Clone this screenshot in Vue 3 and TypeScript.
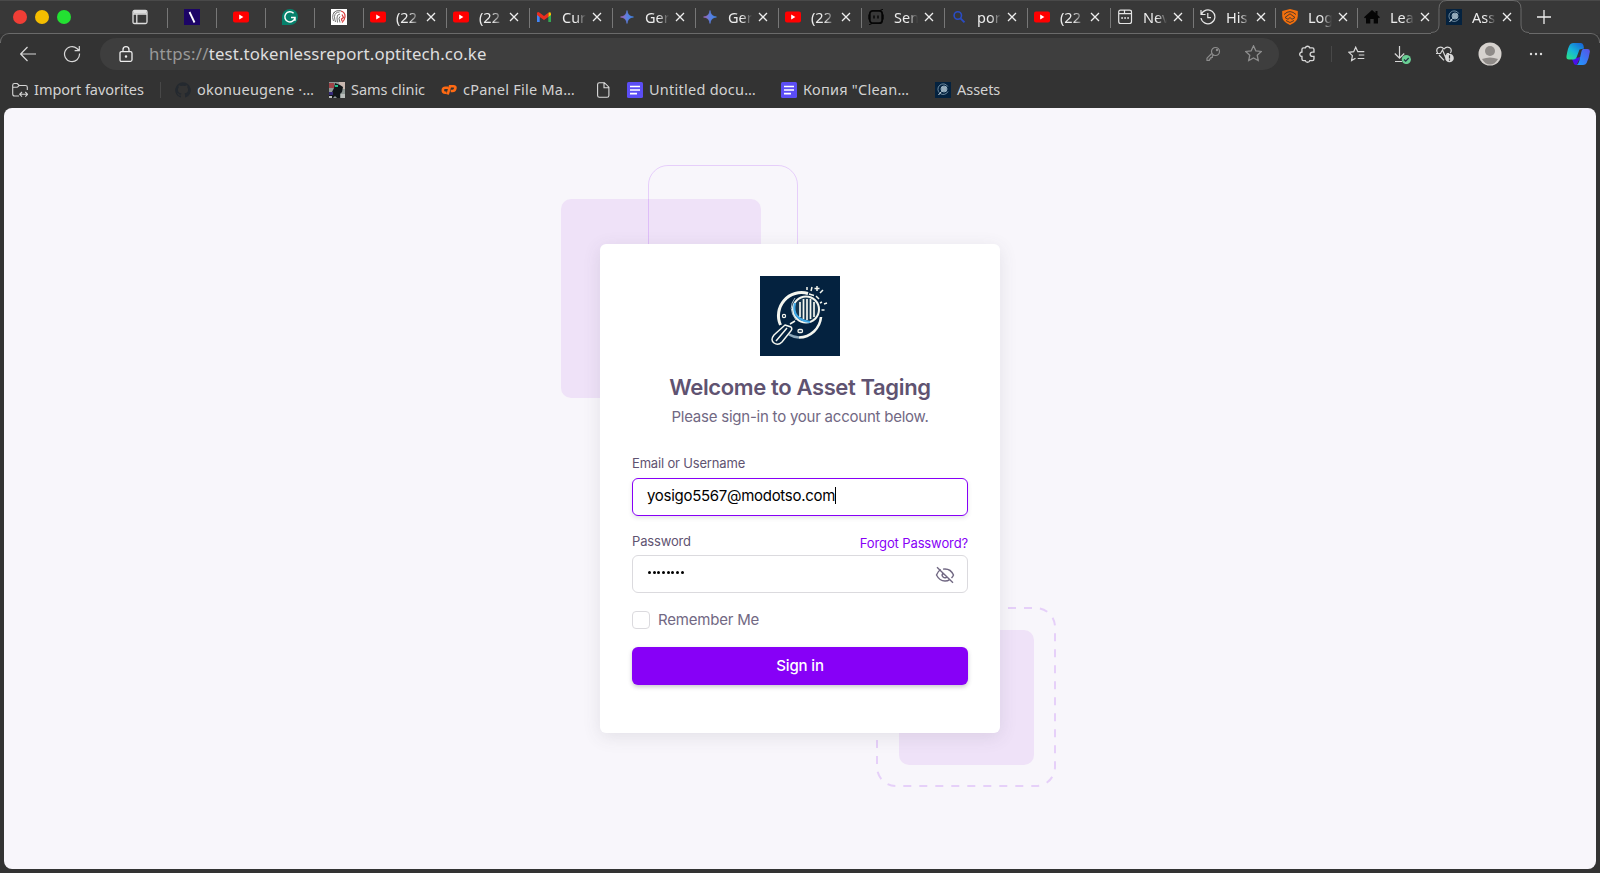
<script setup lang="ts">
interface Tab { icon: string; label: string; active?: boolean; narrow?: boolean }
interface Bookmark { icon: string; label: string; w: number }

const yt = '<rect y="2.6" width="16" height="11" rx="2" fill="#f00"/><path d="M6.2 5.6v5L10.4 8.100z" fill="#fff"/>'
const assets = '<path d="M0 0h16v16H0z" fill="#04223f"/><circle cx="9" cy="7" r="3" fill="#54758d" stroke="#a3bac8" stroke-width=".9"/><path d="M12.8 4.500A5.300 5.300 0 1 0 13 9.500" fill="none" stroke="#7894a8" stroke-width=".9"/><path d="M6.500 9.500L3.500 13M8 5v4M10 5v4" stroke="#d7e2e8" fill="none"/>'
const docs = '<rect width="16" height="16" rx="1.500" fill="#5b4df5"/><path d="M3 4.500h10M3 8h10M3 11.600h7" stroke="#fff" stroke-width="1.700"/>'
const gem = '<defs><linearGradient id="gm"><stop offset=".1" stop-color="#9a68c0"/><stop offset=".5" stop-color="#5a7fe0"/><stop offset="1" stop-color="#3f87ea"/></linearGradient></defs><path d="M8 1.500Q8.600 7.300 14.500 8Q8.600 8.700 8 14.500Q7.400 8.700 1.500 8Q7.400 7.300 8 1.500z" fill="url(#gm)" stroke="url(#gm)" stroke-width=".6"/>'

const glyphs: Record<string, string> = {
  yt, assets, docs, gem,
  slash: '<path d="M0 0h16v16H0z" fill="#1c0466"/><path d="M5.500 3l5 10.500" stroke="#fff" stroke-width="1.800"/>',
  grammar: '<path d="M8 0a8 8 0 1 1 0 16H0V8a8 8 0 0 1 8-8z" fill="#06806b"/><path d="M11.600 4.300A5.100 5.100 0 1 0 13 8.500H9M13 8.500v3.300" fill="none" stroke="#fff" stroke-width="1.500"/>',
  lion: '<path d="M0 0h16v16H0z" fill="#fff"/><g fill="none"><path d="M10 1.800Q4 .5 2 5.500q-1 3 .5 6.500M8.500 3Q4 3 3.500 7.500q0 2.500 1 5.500M9 5Q5.500 5.500 6 9l.5 4.500M9 7.500l-1 2 1 4M2 4.500l2-1.500" stroke="#666" stroke-width=".9"/><path d="M10 2q4.500 1.500 4 6-.5 3.500-3 5.500M11 5.500l1.500 3-2 1.500.5 2" stroke="#d93b3b" stroke-width="1.200"/></g>',
  gmail: '<path d="M1 4.500V13h2.700V7.500z" fill="#4285f4"/><path d="M12.300 7.500V13H15V4.500z" fill="#34a853"/><path d="M12.300 3.800V8L15 6V4.500Q14.500 2.300 12.300 3.800z" fill="#fbbc04"/><path d="M1 6V4.300Q1.500 2.300 3.700 3.700L8 7l4.300-3.300V8L8 11 3.700 8z" fill="#ea2d1f"/>',
  bot: '<rect x="1.800" y="1.800" width="12.400" height="12.400" rx="3" fill="none" stroke="#050505" stroke-width="1.800"/><path d="M6 6.500v3M10 6.500v3M1 5.500v5M15 5.500v5" stroke="#050505" stroke-width="1.400"/><path d="M12 1.500l3-1.300M4 14.500l-3 1.300" stroke="#050505" stroke-width="1"/>',
  search: '<circle cx="6.800" cy="6.500" r="3.700" fill="none" stroke="#2a4cc4" stroke-width="1.600"/><path d="M9.500 9.300l4 4" stroke="#2a4cc4" stroke-width="1.900"/>',
  news: '<path d="M1.700 4V3Q1.700 1.200 3.500 1.200h9Q14.500 1.200 14.500 3v9.500q0 2-2 2h-9q-1.800 0-1.800-2zM2 4.700h5.500V1.500M8 4.700h6" fill="none" stroke="#e4e4e4" stroke-width="1.200"/><path d="M4.200 9h1.800M7.200 9H9M10.200 9H12" stroke="#e4e4e4" stroke-width="1.600"/>',
  history: '<path d="M1 1v4.500h4.500M1.300 5.500A7 7 0 1 1 1 9M7.800 4v4.700h3.200" fill="none" stroke="#e8e8e8" stroke-width="1.200"/>',
  shield: '<path d="M8 0l7.800 2v5q0 6-7.800 9Q.2 13 .2 7V2z" fill="#f3700d"/><path d="M2 5.500Q5 2.500 8 2.600T14 5.500M3 8.500L8 4.800l5 3.700-3 1.800-2-1.800-2 1.800zM4 11.500l4 2 4-2" fill="none" stroke="#42312a" stroke-width=".9"/>',
  house: '<path d="M0 8.300L8 1l3.500 3V2h2v4L16 8.300l-1.200 1L14 8.600V14.500H9.700V10H6.300v4.500H2V8.600l-.9.800z" fill="#050505"/>',
  folder: '<path d="M7 14H2.700Q.7 14 .7 12V3.300Q.7 1.500 2.500 1.500h2.700l2 2h6.300q1.800 0 1.800 1.800V8M.7 5.300h4.500l2-1.800M10 10l-2.300 2.300L10 14.600M13.300 10l2.300 2.300-2.300 2.300M7.800 12.300h7.600" fill="none" stroke="#d5d5d5" stroke-width="1.100"/>',
  github: '<path d="M8 .3a7.800 7.800 0 0 0-2.500 15.200c.4.100.5-.2.500-.4v-1.500c-2.200.5-2.700-.9-2.700-.9-.4-.9-.9-1.200-.9-1.200-.7-.5.100-.5.100-.5.800.100 1.200.8 1.200.8.700 1.200 1.900.9 2.300.7.100-.5.300-.9.500-1.100-1.700-.2-3.600-.9-3.600-3.900 0-.9.300-1.600.8-2.100-.100-.2-.4-1 .100-2.100 0 0 .7-.2 2.200.8a7.600 7.600 0 0 1 4 0c1.500-1 2.200-.8 2.200-.8.4 1.100.200 1.900.100 2.100.5.600.8 1.300.8 2.100 0 3-1.900 3.700-3.600 3.900.3.300.5.700.5 1.500v2.200c0 .2.100.500.5.4A7.800 7.800 0 0 0 8 .3z" fill="#24292f"/>',
  sams: '<path d="M0 0h16v16H0z" fill="#8e9794"/><path d="M10 0h6v7h-5z" fill="#c9b8b0"/><path d="M0 1h5v5H0z" fill="#9c4448"/><path d="M0 16V12l3-2 2-4 1-5 5 2 3 2-1 5-2 2v4H8l-2-2-2 2z" fill="#111619"/><path d="M6 3h3v2H6z" fill="#20c08d"/><path d="M0 10h4v3H0z" fill="#362a79"/><path d="M0 14h3v2H0zM12 12h4v4h-4z" fill="#b9bdbb"/>',
  cpanel: '<path d="M7.200 5.800H4.300q-2.500 0-2.500 2.500t2.500 2.500h1.200M6.700 12.500L9 4.200H12.300q2.700 0 2 2.500-.6 2.300-2.700 2.300H9.700" fill="none" stroke="#ff6a13" stroke-width="2.600"/>',
  page: '<path d="M2.600 2.500Q2.600.700 4.400.700h5l4.500 4.500v8.300q0 1.800-1.800 1.800H4.400q-1.800 0-1.800-1.800zM9 1v4.700h4.600" fill="none" stroke="#dcdcdc" stroke-width="1.100"/>',
}

const pinned = ['slash', 'yt', 'grammar', 'lion']
const tabs: Tab[] = [
  { icon: 'yt', label: '(22' }, { icon: 'yt', label: '(22' }, { icon: 'gmail', label: 'Cur' },
  { icon: 'gem', label: 'Ger' }, { icon: 'gem', label: 'Ger' }, { icon: 'yt', label: '(22' },
  { icon: 'bot', label: 'Sen' }, { icon: 'search', label: 'por' }, { icon: 'yt', label: '(22' },
  { icon: 'news', label: 'Nev' }, { icon: 'history', label: 'His', narrow: true },
  { icon: 'shield', label: 'Log', narrow: true }, { icon: 'house', label: 'Lea', narrow: true },
  { icon: 'assets', label: 'Ass', active: true, narrow: true },
]
const bookmarks: Bookmark[] = [
  { icon: 'github', label: 'okonueugene ·…', w: 154 },
  { icon: 'sams', label: 'Sams clinic', w: 112 },
  { icon: 'cpanel', label: 'cPanel File Ma…', w: 154 },
  { icon: 'page', label: '', w: 32 },
  { icon: 'docs', label: 'Untitled docu…', w: 154 },
  { icon: 'docs', label: 'Копия "Clean…', w: 154 },
  { icon: 'assets', label: 'Assets', w: 90 },
]
const email = 'yosigo5567@modotso.com'
</script>

<template>
  <div class="window">
    <div class="strip">
      <div class="lights"><i class="red" /><i class="amber" /><i class="green" /></div>
      <svg class="panel" viewBox="0 0 16 16"><path d="M2.500 1.500h11q1.500 0 1.500 1.500v10q0 1.500-1.500 1.500h-11Q1 14.500 1 13V3q0-1.500 1.500-1.500zM1 5h14M4.800 5v9.500" fill="none" stroke="#ddd" stroke-width="1.300"/><path d="M1.500 2h13v2.500h-13z" fill="#ddd"/></svg>
      <div v-for="p in pinned" :key="p" class="pin"><svg viewBox="0 0 16 16" v-html="glyphs[p]" /></div>
      <div v-for="(t, i) in tabs" :key="i" class="tab" :class="{ active: t.active, narrow: t.narrow }">
        <svg v-if="t.active" class="outline" viewBox="0 0 98 34"><path d="M0 34V33Q8 33 8 25V8.500Q8 .5 16 .5H82Q90 .5 90 8.500V25Q90 33 98 33V34z" fill="#333" /><path d="M0 32.500Q8 32.500 8 25V8.500Q8 .5 16 .5H82Q90 .5 90 8.500V25Q90 32.500 98 32.500" fill="none" stroke="#6a6a6a" /></svg>
        <svg class="fav" viewBox="0 0 16 16" v-html="glyphs[t.icon]" />
        <span class="name">{{ t.label }}</span>
        <svg class="x" viewBox="0 0 10 10"><path d="M1 1l8 8M9 1L1 9" /></svg>
      </div>
      <svg class="plus" viewBox="0 0 14 14"><path d="M7 0v14M0 7h14" /></svg>
    </div>

    <div class="toolbar">
      <svg class="back" viewBox="0 0 16 16"><path d="M16 8H.7M7.500 1L.7 8l6.800 7" /></svg>
      <svg class="reload" viewBox="0 0 18 18"><path d="M16.500 8.500A7.500 7.500 0 1 1 14 3.500L16 5.500M16.300 1v4.700h-4.700" /></svg>
      <div class="address">
        <svg class="lock" viewBox="0 0 14 16"><path d="M2.500 5.700h9q1.500 0 1.500 1.500v6.600q0 1.500-1.500 1.500h-9Q1 15.300 1 13.800V7.200q0-1.500 1.500-1.500zM4 5.500V3.700a3 3 0 0 1 6 0V5.500" /><circle cx="7" cy="10.500" r=".6" /></svg>
        <span class="url"><em>https://</em>test.tokenlessreport.optitech.co.ke</span>
        <svg class="key" viewBox="0 0 16 16"><circle cx="10.500" cy="5.500" r="4" /><circle cx="12" cy="4" r=".6" /><path d="M6.700 7.500L2 12.200V14.500H4.300v-1.500h1.500v-1.500h1.500V10L8.500 9" /></svg>
        <svg class="star" viewBox="0 0 16 16"><path d="M8 .8l2.200 4.700 5.100.6-3.800 3.500 1 5.100L8 12.200l-4.500 2.500 1-5.100L.7 6.100l5.100-.6z" /></svg>
      </div>
      <svg class="puzzle" viewBox="0 0 16 16"><path d="M5 2.600h1.500a2.100 2.100 0 0 1 4 0h2.200q1.500 0 1.500 1.500v2.200h-1.500a1.900 1.900 0 1 0 0 3.800h1.500v2.300q0 1.500-1.500 1.500h-2.200a2.100 2.100 0 0 1-4 0H5q-1.500 0-1.500-1.500V10.200a2 2 0 1 1 0-4V4.100Q3.500 2.600 5 2.600z" /></svg>
      <i class="rule" />
      <svg class="favs" viewBox="0 0 17 16"><path d="M7.500 12.300l-3.900 2.200.8-4.800L1 6.300l4.700-.6L7.700 1.200l2.100 4.500h6.500M10.800 9h5.500M9.700 12.500h6.600" /></svg>
      <svg class="down" viewBox="0 0 17 18"><path d="M5.500 0v12M.8 7.500l4.700 4.700 4.700-4.700M1 15.500h7" /><circle class="ok" cx="12.300" cy="13.500" r="4.600" /><path class="tick" d="M10 13.500l1.700 1.700 3-3.200" /></svg>
      <svg class="heart" viewBox="0 0 18 17"><path d="M1.600 7Q-.5 3.500 2.500 1.600 5.700 0 8 3q2.300-3 5.500-1.400Q16.500 3.500 14.400 7M3 9l5 5.300M0 7.500h4.500L6.500 4l3 7 1.800-3.500H13" /><circle cx="13.500" cy="12" r="4.300" class="warn" /><path class="mark" d="M13.500 9.300v3.300M13.500 13.600v1.200" /></svg>
      <svg class="avatar" viewBox="0 0 24 24"><circle cx="12" cy="12" r="11.500" fill="#d6d2ce" /><circle cx="12" cy="9" r="5" fill="#8f8b88" /><path d="M4 17q8-3 16 0q-3 5.500-8 5.500T4 17z" fill="#8f8b88" /></svg>
      <svg class="more" viewBox="0 0 14 4"><circle cx="2" cy="2" r="1.200" /><circle cx="7" cy="2" r="1.200" /><circle cx="12" cy="2" r="1.200" /></svg>
      <svg class="copilot" viewBox="0 0 24 24">
        <defs>
          <linearGradient id="cpa" x1="0" y1="1" x2=".8" y2="0"><stop offset="0" stop-color="#2be87e" /><stop offset=".5" stop-color="#16b5d8" /><stop offset="1" stop-color="#1768d8" /></linearGradient>
          <linearGradient id="cpb" x1="0" y1="1" x2="1" y2="0"><stop offset="0" stop-color="#1aa0ff" /><stop offset="1" stop-color="#5a4fe6" /></linearGradient>
        </defs>
        <path d="M6 17l2 5q.5 1 2.500 1l4-8z" fill="#4a10e8" />
        <path d="M7 1h8q2 0 2.500 2.500l.5 3-4.500 1-3 8q-.8 2-3 2H3q-3 0-2.500-3.500Q2 5 4 2.500 5 1 7 1z" fill="url(#cpa)" />
        <path d="M17 7h4.500q2.800 0 2.300 3-1 7-3.200 11-1 2-3.500 2H10.500q2-1 2.800-4l2-9q.5-2.500 1.700-3z" fill="url(#cpb)" />
      </svg>
    </div>

    <div class="bookmarks">
      <div class="mark-item import"><svg class="fav" viewBox="0 0 16 16" v-html="glyphs.folder" /><span>Import favorites</span></div>
      <i class="rule" />
      <div v-for="(b, i) in bookmarks" :key="i" class="mark-item" :class="{ cut: b.label.endsWith('…') }" :style="{ width: b.w + 'px' }">
        <svg class="fav" viewBox="0 0 16 16" v-html="glyphs[b.icon]" /><span v-if="b.label">{{ b.label }}</span>
      </div>
    </div>

    <main class="page">
      <div class="auth">
        <div class="shape fill-top" />
        <div class="shape line-top" />
        <div class="shape fill-bottom" />
        <svg class="shape dash-bottom" viewBox="0 0 180 180"><path d="M20 1H160A19 19 0 0 1 179 20V160A19 19 0 0 1 160 179H20A19 19 0 0 1 1 160V20A19 19 0 0 1 20 1" /></svg>
        <form class="card" @submit.prevent>
          <svg class="logo" viewBox="0 0 80 80">
            <path d="M0 0h80v80H0z" fill="#04223f" />
            <g fill="none" stroke="#f4f6ef">
              <path d="M20.500 49A23 23 0 0 1 48 17.500" stroke-width="3" />
              <path d="M61 41A22.500 22.500 0 0 1 39 61.500" stroke-width="2.600" />
              <path d="M39 61.500Q33 61 29 58.500" stroke="#8ea9bb" stroke-width="2.600" />
              <circle cx="46" cy="33.500" r="13" stroke-width="2" fill="#16364f" />
              <path d="M35 22q-8 10 1 22" stroke-width="1" stroke="#a9bfca" />
              <path d="M35 27Q31 43 50 46" stroke="#41a9e6" stroke-width="2.200" />
              <path d="M40 26v15M43.500 23v20M47 23v21M50.500 23v20M54 26v15" stroke-width="1.700" />
              <path d="M30 48l5-3M25 49l6 2q2 2-1 5l-8 10q-4 4-8 1t0-8zM27 52L16 65" stroke-width="1.500" />
              <circle cx="24" cy="40" r="1.600" stroke-width="1.200" />
              <rect x="38" y="53.500" width="4.500" height="3" rx="1.200" stroke-width="1.300" />
              <path d="M47 11v3M52 11l-1 4M57 10v5M54.500 12.500h5M49 18l5 1.500M56 20l3 3M60 17l3-3M60 27l2-1M64 28l3-1M61.500 34h3" stroke-width="1.500" />
            </g>
          </svg>
          <h1>Welcome to Asset Taging</h1>
          <p class="sub">Please sign-in to your account below.</p>
          <label class="lab">Email or Username</label>
          <div class="field focus"><span class="val">{{ email }}</span><i class="caret" /></div>
          <div class="row"><label class="lab">Password</label><a class="forgot">Forgot Password?</a></div>
          <div class="field second">
            <span class="dots"><i v-for="n in 8" :key="n" /></span>
            <svg class="eye" viewBox="0 0 20 18"><path d="M5.700 3.500Q3 5 1.500 9q3 6 8.500 6 2.700 0 4.700-1.400M8 3.100Q15.500 2 18.500 9q-.7 1.700-2 3M2 1.200l16 15.500M8 7.200a2.600 2.600 0 0 0 3.800 3.700" /></svg>
          </div>
          <div class="remember"><i class="box" /><span>Remember Me</span></div>
          <button class="signin">Sign in</button>
        </form>
      </div>
    </main>
  </div>
</template>

<style>
html, body { margin: 0; background: #333; }
</style>

<style scoped>
* { box-sizing: border-box; }
svg { display: block; flex: none; }
i, em { font-style: normal; flex: none; }
.window { width: 1600px; height: 873px; background: #333; display: flex; flex-direction: column; font-family: "Noto Sans", sans-serif; overflow: hidden; }
.strip { height: 34px; display: flex; align-items: stretch; background: #383838; border-top: 1px solid #494949; padding-bottom: 2px; position: relative; flex: none; }
.strip::after { content: ""; position: absolute; left: 0; right: 0; top: 32px; height: 9px; border: 1px solid #6a6a6a; border-bottom: 0; border-radius: 9px 9px 0 0; background: #333; }
.lights { display: flex; gap: 8px; align-items: center; padding: 1px 0 0 13px; width: 132px; }
.lights i { width: 14px; height: 14px; border-radius: 50%; }
.red { background: #f03e36; }
.amber { background: #f4bd00; }
.green { background: #23e132; }
.panel { width: 16px; height: 16px; align-self: center; margin-right: 19px; }
.pin { width: 49px; padding-left: 17px; display: flex; align-items: center; position: relative; }
.pin svg, .fav { width: 16px; height: 16px; }
.pin::before, .tab::before { content: ""; position: absolute; left: 0; top: 7px; width: 1px; height: 20px; background: #777; }
.tab { width: 83px; padding-left: 7px; display: flex; align-items: center; position: relative; }
.tab.narrow { width: 82px; }
.tab .name { width: 25px; margin: 0 5px 0 10px; white-space: nowrap; font-size: 14.500px; color: #ececec; -webkit-mask-image: linear-gradient(90deg, #000 55%, transparent 96%); mask-image: linear-gradient(90deg, #000 55%, transparent 96%); }
.x { width: 10px; height: 10px; }
.x path, .plus path { stroke: #eee; stroke-width: 1.300; fill: none; }
.tab.active { z-index: 2; }
.tab.active::before { display: none; }
.tab.active .fav, .tab.active .name, .tab.active .x { position: relative; }
.outline { position: absolute; left: -8px; top: -1px; width: 98px; height: 34px; }
.plus { width: 14px; height: 14px; align-self: center; margin-left: 16px; }
.toolbar { height: 41px; flex: none; display: flex; align-items: center; padding: 0 0 2px 20px; position: relative; z-index: 1; }
.toolbar svg { fill: none; stroke: #d8d8d8; stroke-width: 1.200; }
.toolbar svg.copilot, .toolbar svg.avatar { stroke: none; }
.back { width: 16px; height: 16px; margin-right: 27px; }
.reload { width: 18px; height: 18px; margin-right: 19px; }
.address { width: 1179px; height: 32px; border-radius: 16px; background: #3e3e3e; display: flex; align-items: center; padding-left: 19px; }
.lock { width: 14px; height: 16px; margin-right: 16px; }
.address .lock { stroke: #eee; stroke-width: 1.300; }
.url { font-size: 16.800px; letter-spacing: .12px; color: #dedede; white-space: nowrap; }
.url em { color: #999; letter-spacing: .25px; }
.address .key { width: 16px; height: 16px; margin-left: auto; margin-right: 24px; stroke: #8e8e8e; }
.address .star { width: 17px; height: 17px; margin-right: 17px; stroke: #8e8e8e; }
.puzzle { width: 18px; height: 18px; margin-left: 19px; margin-right: 15px; }
.rule { width: 1px; height: 16px; background: #484848; }
.favs { width: 17px; height: 16px; margin-left: 16px; }
.down { width: 17px; height: 18px; margin-left: 29px; margin-top: 3px; }
.toolbar .down .ok { fill: #69cf94; stroke: none; }
.toolbar .tick { stroke: #234; }
.heart { width: 18px; height: 17px; margin-left: 25px; margin-top: 2px; }
.toolbar .warn { fill: #dadada; stroke: none; }
.toolbar .mark { stroke: #333; }
.avatar { width: 24px; height: 24px; margin-left: 24px; }
.more { width: 14px; height: 4px; margin-left: 27px; }
.toolbar .more { fill: #ddd; stroke: none; }
.copilot { width: 24px; height: 24px; margin-left: 23px; }
.bookmarks { height: 33px; flex: none; display: flex; align-items: center; padding-left: 12px; padding-bottom: 4px; font-size: 14.500px; letter-spacing: -.04px; color: #d2d2d2; white-space: nowrap; }
.bookmarks .cut { letter-spacing: .25px; }
.mark-item { display: flex; align-items: center; gap: 6px; }
.mark-item span { padding-bottom: 1px; line-height: 19px; }
.import { width: 148px; }
.bookmarks .rule { margin-right: 14px; }
.page { margin: 0 4px; height: 761px; border-radius: 8px; background: #f8f6fb; flex: none; padding-top: 136px; }
.auth { width: 400px; margin: 0 auto; position: relative; }
.shape { position: absolute; }
.fill-top { left: -39.500px; top: -45px; width: 200px; height: 199px; border-radius: 10px; background: #efe2f8; }
.line-top { left: 48px; top: -79px; width: 150px; height: 150px; border-radius: 20px; border: 1px solid rgba(135, 0, 247, .16); }
.fill-bottom { left: 299px; top: 386px; width: 135px; height: 135px; border-radius: 10px; background: #efe2f8; }
.dash-bottom { left: 276px; top: 363px; width: 180px; height: 180px; fill: none; stroke: #e6d0f9; stroke-width: 2; stroke-dasharray: 8 8; }
.card { position: relative; width: 400px; height: 489px; padding: 32px; background: #fff; border-radius: 6px; box-shadow: 0 4px 18px rgba(75, 70, 92, .12); display: flex; flex-direction: column; font-family: Inter, sans-serif; color: #716883; font-size: 15px; white-space: nowrap; }
.logo { width: 80px; height: 80px; align-self: center; }
h1 { margin: 16px 0 0; font-size: 22px; line-height: 30px; font-weight: 600; letter-spacing: -.37px; color: #5f5371; text-align: center; }
.sub { margin: 4px 0 0; line-height: 22px; letter-spacing: -.23px; text-align: center; }
.lab { font-size: 13px; line-height: 20px; letter-spacing: -.17px; color: #5f5371; }
.sub + .lab { margin-top: 25px; margin-bottom: 1px; }
.field { height: 38px; border: 1px solid #dbdade; border-radius: 6px; display: flex; align-items: center; padding: 0 13px 3px 14px; margin-top: 4px; color: #000; flex: none; }
.val { letter-spacing: -.29px; }
.focus { border-color: #8700f7; box-shadow: 0 2px 4px rgba(75, 70, 92, .15); }
.caret { width: 1px; height: 17px; background: #000; }
.row { display: flex; justify-content: space-between; margin-top: 15px; height: 20px; }
.forgot { color: #8700f7; font-size: 13px; line-height: 24px; letter-spacing: -.12px; }
.second { justify-content: space-between; padding-left: 15px; padding-right: 12px; }
.dots { display: flex; gap: 1.700px; }
.dots i { width: 3px; height: 3px; border-radius: 50%; background: #000; }
.eye { width: 20px; height: 18px; margin-top: 5px; fill: none; stroke: #716883; stroke-width: 1.400; }
.remember { display: flex; align-items: center; gap: 8px; height: 18px; margin-top: 18px; letter-spacing: -.2px; }
.remember span { padding-bottom: 1px; }
.signin { margin: 18px 0 0; padding: 0 0 2px; height: 38px; border: 0; border-radius: 6px; background: #8700f7; color: #fff; font: 500 15px Inter, sans-serif; letter-spacing: -.15px; box-shadow: 0 2px 4px rgba(75, 70, 92, .3); }
.box { width: 18px; height: 18px; border: 1px solid #dbdade; border-radius: 4px; }
</style>
